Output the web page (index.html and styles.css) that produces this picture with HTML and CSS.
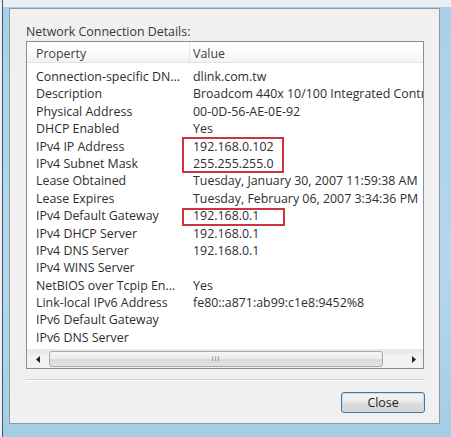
FILE: index.html
```html
<!DOCTYPE html>
<html>
<head>
<meta charset="utf-8">
<link rel="stylesheet" href="styles.css">
</head>
<body>
<div class="window">
  <div class="face">
    <div class="label">Network Connection Details:</div>
    <div class="listview">
      <div class="header">
        <div class="col1 hcell">Property</div>
        <div class="col2 hcell">Value</div>
      </div>
      <div class="rows">
        <div class="row"><div class="col1">Connection-specific DN...</div><div class="col2">dlink.com.tw</div></div>
        <div class="row"><div class="col1">Description</div><div class="col2">Broadcom 440x 10/100 Integrated Controller</div></div>
        <div class="row"><div class="col1">Physical Address</div><div class="col2">00-0D-56-AE-0E-92</div></div>
        <div class="row"><div class="col1">DHCP Enabled</div><div class="col2">Yes</div></div>
        <div class="row"><div class="col1">IPv4 IP Address</div><div class="col2">192.168.0.102</div></div>
        <div class="row"><div class="col1">IPv4 Subnet Mask</div><div class="col2">255.255.255.0</div></div>
        <div class="row"><div class="col1">Lease Obtained</div><div class="col2">Tuesday, January 30, 2007 11:59:38 AM</div></div>
        <div class="row"><div class="col1">Lease Expires</div><div class="col2">Tuesday, February 06, 2007 3:34:36 PM</div></div>
        <div class="row"><div class="col1">IPv4 Default Gateway</div><div class="col2">192.168.0.1</div></div>
        <div class="row"><div class="col1">IPv4 DHCP Server</div><div class="col2">192.168.0.1</div></div>
        <div class="row"><div class="col1">IPv4 DNS Server</div><div class="col2">192.168.0.1</div></div>
        <div class="row"><div class="col1">IPv4 WINS Server</div><div class="col2"></div></div>
        <div class="row"><div class="col1">NetBIOS over Tcpip En...</div><div class="col2">Yes</div></div>
        <div class="row"><div class="col1">Link-local IPv6 Address</div><div class="col2">fe80::a871:ab99:c1e8:9452%8</div></div>
        <div class="row"><div class="col1">IPv6 Default Gateway</div><div class="col2"></div></div>
        <div class="row"><div class="col1">IPv6 DNS Server</div><div class="col2"></div></div>
      </div>
      <div class="scrollbar">
        <div class="arrow arrow-left">
          <svg width="4" height="7" viewBox="0 0 4 7"><path d="M4 0 L0 3.5 L4 7 Z" fill="#222"/></svg>
        </div>
        <div class="thumb"><span class="grip">III</span></div>
        <div class="track"></div>
        <div class="arrow arrow-right">
          <svg width="4" height="7" viewBox="0 0 4 7"><path d="M0 0 L4 3.5 L0 7 Z" fill="#222"/></svg>
        </div>
      </div>
      <div class="mark mark-ip"></div>
      <div class="mark mark-gw"></div>
    </div>
    <div class="separator"></div>
    <div class="buttons">
      <button class="btn">Close</button>
    </div>
  </div>
</div>
</body>
</html>
```

FILE: styles.css
```css
html, body {
  margin: 0;
  padding: 0;
}
body {
  width: 451px;
  height: 437px;
  overflow: hidden;
  font-family: "Open Sans", "Noto Sans", "DejaVu Sans", sans-serif;
  font-size: 12.4px;
  color: #2e2e2e;
}
.window {
  box-sizing: border-box;
  width: 451px;
  height: 437px;
  padding: 8px 11px 13px 9px;
  background:
    linear-gradient(to right, #eef1f3 0 2px, #4a545e 2px 3px, transparent 3px),
    linear-gradient(to bottom, #e8eef2 0 7px, #a9d0e8 7px, #b3d8ee 60%, #a6cde6 100%);
  display: flex;
}
.face {
  flex: 1;
  min-width: 0;
  box-sizing: border-box;
  border: 1px solid #8d9aa6;
  background: #f1f0f0;
  padding: 15px 15px 10px 16px;
  display: flex;
  flex-direction: column;
}
.label {
  line-height: 15px;
  height: 15px;
  margin-bottom: 2px;
  color: #383838;
}
.listview {
  position: relative;
  box-sizing: border-box;
  height: 328px;
  min-width: 0;
  border: 1px solid #8a8f96;
  background: #fff;
  display: flex;
  flex-direction: column;
  overflow: hidden;
}
.header {
  box-sizing: border-box;
  height: 21px;
  flex: none;
  display: flex;
  background: linear-gradient(to bottom, #ffffff 0%, #fbfbfb 50%, #f2f3f4 100%);
  border-bottom: 1px solid #e2e3e5;
}
.hcell {
  line-height: 20px;
  padding-top: 2px;
  color: #404040;
}
.header .col1 {
  border-right: 1px solid #e6e6e6;
}
.rows {
  flex: 1;
  padding-top: 5px;
  min-width: 0;
}
.row {
  display: flex;
  height: 17.4px;
  line-height: 17.4px;
  white-space: nowrap;
  min-width: 0;
}
.col1 {
  box-sizing: border-box;
  width: 163px;
  flex: none;
  padding-left: 9px;
  overflow: hidden;
}
.col2 {
  flex: 1;
  min-width: 0;
  padding-left: 3px;
  overflow: hidden;
  white-space: nowrap;
}
.scrollbar {
  flex: none;
  height: 18px;
  display: flex;
  align-items: stretch;
  background: linear-gradient(to bottom, #e6e6e6 0%, #f4f4f4 40%, #f0f0f0 100%);
  border-top: 1px solid #eaeaea;
}
.arrow {
  display: flex;
  align-items: center;
  justify-content: center;
  flex: none;
}
.arrow-left {
  width: 22px;
}
.arrow-right {
  width: 18px;
}
.thumb {
  box-sizing: border-box;
  width: 334px;
  flex: none;
  margin: 1px 0 1px 0;
  border: 1px solid #a9a9a9;
  border-radius: 3px;
  background: linear-gradient(to bottom, #f6f6f6 0%, #ececec 45%, #dadada 55%, #e2e2e2 100%);
  display: flex;
  align-items: center;
  justify-content: center;
}
.grip {
  font-size: 7px;
  letter-spacing: 1px;
  color: #777;
  line-height: 8px;
}
.track {
  flex: 1;
}
.mark {
  position: absolute;
  box-sizing: border-box;
  border: 2px solid #cc3540;
}
.mark-ip {
  left: 155px;
  top: 95px;
  width: 102px;
  height: 36px;
}
.mark-gw {
  left: 155px;
  top: 166px;
  width: 103px;
  height: 18px;
}
.separator {
  margin-top: 10px;
  height: 1px;
  background: #d2d2d2;
  border-bottom: 1px solid #ffffff;
}
.buttons {
  margin-top: 11px;
  display: flex;
  justify-content: flex-end;
  margin-right: -1px;
}
.btn {
  box-sizing: border-box;
  width: 84px;
  height: 21px;
  font-family: inherit;
  font-size: 12.4px;
  color: #222;
  padding: 0;
  border: 1px solid #4c7396;
  border-radius: 3px;
  background: linear-gradient(to bottom, #f3f3f3 0%, #ebebeb 48%, #dcdcdc 52%, #d6d6d6 100%);
  box-shadow: inset 0 0 0 1px #b9e0f5;
}
```
